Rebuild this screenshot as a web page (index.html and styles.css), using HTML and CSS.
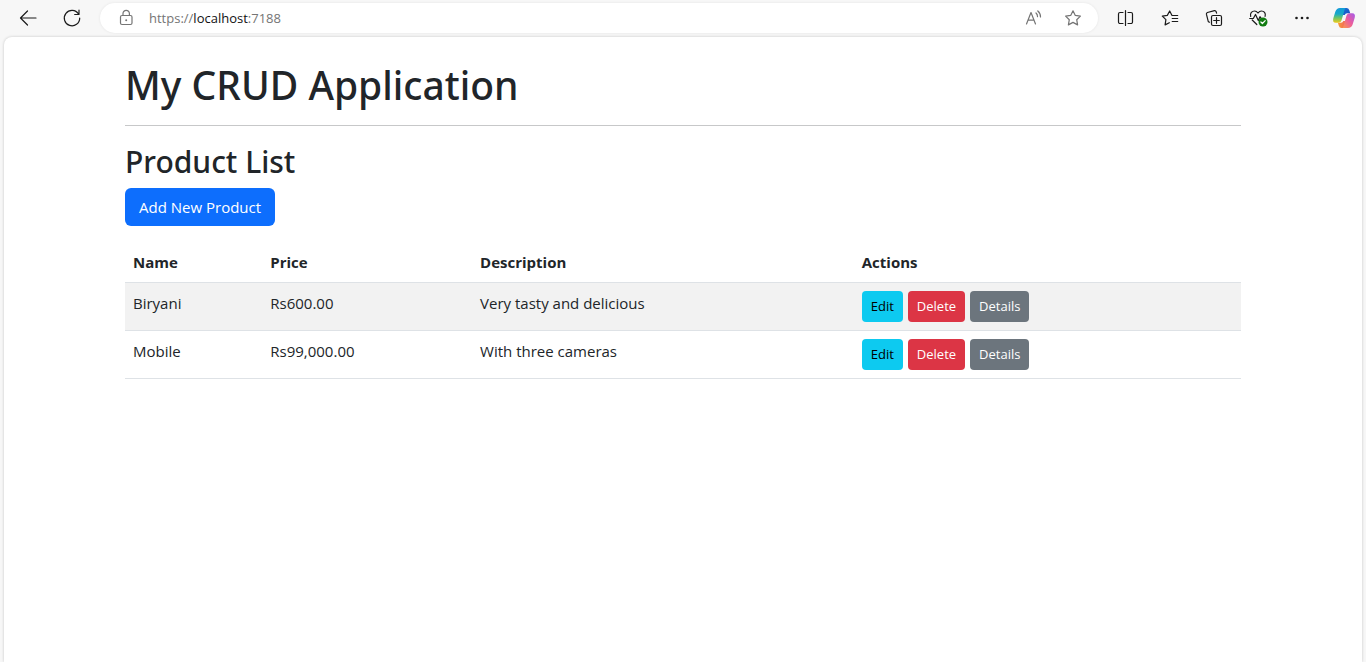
FILE: index.html
```html
<!DOCTYPE html>
<html lang="en">
<head>
<meta charset="utf-8">
<meta name="viewport" content="width=device-width, initial-scale=1">
<title>My CRUD Application</title>
<link rel="stylesheet" href="styles.css">
</head>
<body>
<div class="browser">
  <header class="toolbar">
    <div class="nav">
      <button class="icon-btn" type="button" aria-label="Back">
        <svg width="20" height="20" viewBox="0 0 20 20"><path d="M18 10H2.5M9.5 3L2.5 10L9.5 17"/></svg>
      </button>
      <button class="icon-btn" type="button" aria-label="Refresh">
        <svg width="20" height="20" viewBox="0 0 20 20"><path d="M16.5 6A7.7 7.7 0 1 0 17.7 10M17 2.2V6.5H12.7"/></svg>
      </button>
    </div>
    <div class="address">
      <button class="icon-btn muted" type="button" aria-label="View site information">
        <svg width="20" height="20" viewBox="0 0 20 20"><rect x="4.5" y="7.5" width="11.5" height="9" rx="1.5"/><path d="M7 7.5V5.5a3.2 3.2 0 0 1 6.4 0V7.5"/><circle class="dot" cx="10.2" cy="12.2" r="1"/></svg>
      </button>
      <div class="url" role="textbox" aria-label="Address" tabindex="0"><span>https://</span><span class="host">localhost</span><span>:7188</span></div>
      <div class="address-actions">
        <button class="icon-btn muted" type="button" aria-label="Read aloud">
          <svg width="20" height="20" viewBox="0 0 20 20"><path d="M3.5 16L8 4.5L12.5 16M5.2 12.2H10.9M13 5A4.5 4.5 0 0 1 14.5 8.6M14.8 3A7.5 7.5 0 0 1 17.5 9"/></svg>
        </button>
        <button class="icon-btn muted" type="button" aria-label="Add to favorites">
          <svg width="20" height="20" viewBox="0 0 20 20"><path d="M10 2.8L12.3 7.4L17.4 8.1L13.7 11.7L14.6 16.9L10 14.4L5.4 16.9L6.3 11.7L2.6 8.1L7.7 7.4Z"/></svg>
        </button>
      </div>
    </div>
    <div class="tools">
      <button class="icon-btn" type="button" aria-label="Split screen">
        <svg width="20" height="20" viewBox="0 0 20 20"><path d="M7 4.5H4a1.5 1.5 0 0 0-1.5 1.5V14a1.5 1.5 0 0 0 1.5 1.5H7M12 4.5H15a1.5 1.5 0 0 1 1.5 1.5V14a1.5 1.5 0 0 1-1.5 1.5H12M9.5 2.5V17.5"/></svg>
      </button>
      <button class="icon-btn" type="button" aria-label="Favorites">
        <svg width="20" height="20" viewBox="0 0 20 20"><path d="M17.7 7.5H12L9.7 3L7.3 7.4L2.3 8.1L5.9 11.7L5.1 16.9L9.3 14.7M12.2 10.5H17.7M12.2 13.5H17.7"/></svg>
      </button>
      <button class="icon-btn" type="button" aria-label="Collections">
        <svg width="20" height="20" viewBox="0 0 20 20"><rect x="7.5" y="7.5" width="10" height="10" rx="1.5"/><path d="M12.5 9.7V15.3M9.7 12.5H15.3M5.5 14.2L4.3 13.6L2.4 6.2Q2.2 5 3.4 4.5L10.5 2.7Q11.7 2.5 12.2 3.8L12.6 5.2"/></svg>
      </button>
      <button class="icon-btn" type="button" aria-label="Browser essentials">
        <svg width="20" height="20" viewBox="0 0 20 20"><path d="M2.7 8.5C1.7 5 4.2 3 6.6 3C8.2 3 9.2 4 10 5C10.8 4 11.8 3 13.4 3C16 3 18 5.2 17.1 8.3M1.7 10.5H5.3L7.5 6.5L10.3 12.5L12 8.7L13.2 10.5M4.2 12L8.8 16.5"/><circle class="status" cx="15" cy="14" r="4.5"/><path class="tick" d="M12.9 14L14.4 15.5L17.2 12.6"/></svg>
      </button>
      <button class="icon-btn" type="button" aria-label="Settings and more">
        <svg width="20" height="20" viewBox="0 0 20 20"><circle class="dot" cx="4.5" cy="10" r="1.3"/><circle class="dot" cx="10" cy="10" r="1.3"/><circle class="dot" cx="15.5" cy="10" r="1.3"/></svg>
      </button>
    </div>
    <button class="icon-btn copilot" type="button" aria-label="Copilot">
      <svg width="24" height="24" viewBox="0 0 24 24">
        <defs>
          <linearGradient id="cool" x1="0" y1="0" x2="0" y2="1"><stop offset="0" stop-color="#139ad8"/><stop offset=".4" stop-color="#18a8c8"/><stop offset=".65" stop-color="#67c46c"/><stop offset="1" stop-color="#f2cb16"/></linearGradient>
          <linearGradient id="warm" x1="1" y1="0" x2="0" y2="1"><stop offset="0" stop-color="#a35bec"/><stop offset=".5" stop-color="#ec5d9c"/><stop offset="1" stop-color="#fb9a4a"/></linearGradient>
          <linearGradient id="blue" x1="0" y1="0" x2="1" y2="1"><stop offset="0" stop-color="#1776d8"/><stop offset="1" stop-color="#1a50c0"/></linearGradient>
          <linearGradient id="coral" x1="0" y1="0" x2="1" y2="0"><stop offset="0" stop-color="#f79b37"/><stop offset="1" stop-color="#ef5666"/></linearGradient>
        </defs>
        <path class="fill-blue" d="M8 2H14.5Q16.6 2 17.3 4.2L18.2 7.2H15Q13.3 7.2 12.7 9L10 9Z"/>
        <path class="fill-coral" d="M16 22H9.5Q7.4 22 6.8 19.8L5.9 16.8H9Q10.7 16.8 11.3 15L14 15Z"/>
        <path class="fill-cool" d="M8 2H13.5Q12.8 2.3 12.2 5L9.8 13.5Q8.9 16.8 6.2 16.8H3.8Q.2 16.8 1.3 12.2L3.3 5.8Q4.5 2 8 2Z"/>
        <path class="fill-warm" d="M16 22H10.5Q11.2 21.7 11.8 19L14.2 10.5Q15.1 7.2 17.8 7.2H20.2Q23.8 7.2 22.7 11.8L20.7 18.2Q19.5 22 16 22Z"/>
      </svg>
    </button>
  </header>
  <main class="page">
    <div class="container">
      <h1>My CRUD Application</h1>
      <hr>
      <h2>Product List</h2>
      <a class="btn primary" href="#add">Add New Product</a>
      <table class="products">
        <colgroup><col class="col-name"><col class="col-price"><col class="col-description"><col></colgroup>
        <thead>
          <tr><th scope="col">Name</th><th scope="col">Price</th><th scope="col">Description</th><th scope="col">Actions</th></tr>
        </thead>
        <tbody>
          <tr>
            <td>Biryani</td><td>Rs600.00</td><td>Very tasty and delicious</td>
            <td><div class="actions"><a class="btn small info" href="#edit-1">Edit</a><a class="btn small danger" href="#delete-1">Delete</a><a class="btn small secondary" href="#details-1">Details</a></div></td>
          </tr>
          <tr>
            <td>Mobile</td><td>Rs99,000.00</td><td>With three cameras</td>
            <td><div class="actions"><a class="btn small info" href="#edit-2">Edit</a><a class="btn small danger" href="#delete-2">Delete</a><a class="btn small secondary" href="#details-2">Details</a></div></td>
          </tr>
        </tbody>
      </table>
    </div>
  </main>
</div>
</body>
</html>
```
FILE: styles.css
```css
* { box-sizing: border-box; }

body {
  margin: 0;
  font-family: "Segoe UI", "Open Sans", "Noto Sans", sans-serif;
  font-size: 15px;
  line-height: 24px;
  color: #212529;
  background: #f7f7f7;
}

.browser {
  display: flex;
  flex-direction: column;
  min-height: 100vh;
}

/* Browser toolbar */
.toolbar {
  display: flex;
  align-items: center;
  height: 37px;
  padding: 0 10px 1px 16px;
}

.nav, .tools { display: flex; gap: 20px; }

.icon-btn {
  display: flex;
  align-items: center;
  justify-content: center;
  width: 24px;
  height: 24px;
  padding: 0;
  border: 0;
  background: none;
  color: #1b1b1b;
}

.icon-btn svg {
  fill: none;
  stroke: currentColor;
  stroke-width: 1.2;
  stroke-linecap: round;
  stroke-linejoin: round;
}

.icon-btn.muted { color: #757575; }
.icon-btn .dot { fill: currentColor; stroke: none; }
.icon-btn .status { fill: #107c10; stroke: none; }
.icon-btn .tick { stroke: #fff; }
.copilot { margin-left: 18px; }
.icon-btn.copilot svg { stroke: none; }
.fill-cool { fill: url(#cool); }
.fill-warm { fill: url(#warm); }
.fill-blue { fill: url(#blue); }
.fill-coral { fill: url(#coral); }

.address {
  display: flex;
  flex: 1;
  align-items: center;
  gap: 11px;
  height: 30px;
  margin: 0 16px;
  padding: 0 13px 0 14px;
  border-radius: 15px;
  background: #fff;
  box-shadow: 0 0 3px rgba(0, 0, 0, .08);
}

.address-actions { display: flex; gap: 16px; }

.url {
  flex: 1;
  font-size: 13px;
  line-height: 20px;
  color: #757575;
}

.url .host { color: #111; }

/* Web page */
.page {
  flex: 1;
  margin: 0 4px;
  padding: 24px 12px;
  border-radius: 8px 8px 0 0;
  background: #fff;
  box-shadow: 0 0 3px rgba(0, 0, 0, .2);
}

.container {
  max-width: 1116px;
  margin: 0 auto;
}

h1, h2 {
  margin: 0;
  font-family: "Segoe UI", "Noto Sans", sans-serif;
  font-weight: 500;
}

h1 { font-size: 39px; line-height: 48px; }

h2 {
  margin-bottom: 6px;
  font-size: 30px;
  line-height: 40px;
}

hr {
  margin: 16px 0;
  border: 0;
  border-top: 1px solid #c7c8c9;
}

.btn {
  display: inline-block;
  padding: 7px 14px;
  border-radius: 6px;
  color: #fff;
  text-decoration: none;
}

.small {
  padding: 5px 9px;
  border-radius: 4px;
  font-size: 13px;
  line-height: 21px;
}

.primary { background: #0d6efd; }
.info { background: #0dcaf0; color: #000; }
.danger { background: #dc3545; }
.secondary { background: #6c757d; }

.products {
  width: 100%;
  margin-top: 16px;
  border-collapse: collapse;
  table-layout: fixed;
}

.col-name { width: 12.3%; }
.col-price { width: 18.8%; }
.col-description { width: 34.2%; }

th, td {
  padding: 8px;
  border-bottom: 1px solid #dee2e6;
  text-align: left;
  vertical-align: top;
}

th { font-weight: 700; }

tbody tr:nth-child(odd) { background: #f2f2f2; }

.actions { display: flex; gap: 5px; }
```
